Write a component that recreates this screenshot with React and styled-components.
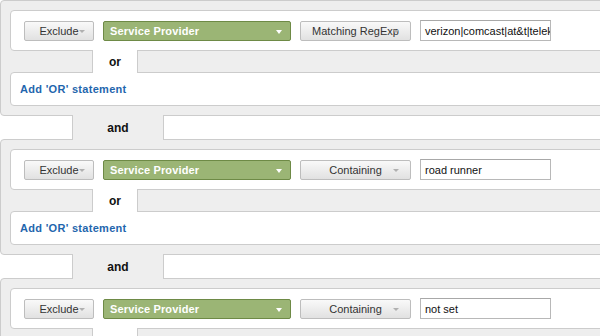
import React from "react";
import styled, { createGlobalStyle } from "styled-components";

const Global = createGlobalStyle`
  html, body { margin: 0; padding: 0; background: #fff; overflow: hidden; }
  body { font-family: "Liberation Sans", Arial, sans-serif; }
  #root { width: 680px; }
`;

const Page = styled.div`
  display: flex;
  flex-direction: column;
  width: 680px;
`;

const Group = styled.div`
  background: #eeeeee;
  border: 1px solid #cccccc;
  border-radius: 4px;
  padding: 9px;
  display: flex;
  flex-direction: column;
`;

const Clause = styled.div`
  background: #fff;
  border: 1px solid #cccccc;
  border-radius: 4px;
  height: 20px;
  padding: 10px 0 9px 13px;
  display: flex;
  align-items: flex-start;
  gap: 9px;
`;

const OrLink = styled.div`
  align-self: flex-start;
  margin: -1px 0 -1px 82px;
  width: 44px;
  height: 23px;
  background: #fff;
  border-left: 1px solid #cccccc;
  border-right: 1px solid #cccccc;
  position: relative;
  z-index: 1;
  display: flex;
  align-items: center;
  justify-content: center;
  font-size: 12px;
  font-weight: bold;
  color: #111;
`;

const AndLink = styled.div`
  align-self: flex-start;
  margin: -1px 0 -1px 72px;
  width: 90px;
  height: 25px;
  background: #eeeeee;
  border-left: 1px solid #cccccc;
  border-right: 1px solid #cccccc;
  position: relative;
  z-index: 1;
  display: flex;
  align-items: center;
  justify-content: center;
  font-size: 12px;
  font-weight: bold;
  color: #111;
`;

const AddBox = styled.div`
  background: #fff;
  border: 1px solid #cccccc;
  border-radius: 4px;
  height: 32px;
  padding-left: 9px;
  display: flex;
  align-items: center;
  font-size: 11px;
  line-height: 12px;
  font-weight: bold;
  letter-spacing: 0.3px;
  color: #1f66ad;
  cursor: pointer;
`;

const GrayButton = styled.div`
  position: relative;
  box-sizing: border-box;
  width: ${(p) => p.$w}px;
  height: 20px;
  border: 1px solid #bdbdbd;
  border-radius: 2px;
  background: linear-gradient(#f9f9f9, #e1e1e1);
  display: flex;
  align-items: center;
  justify-content: center;
  font-size: 11px;
  color: #333;
  flex-shrink: 0;
`;

const GrayArrow = styled.span`
  position: absolute;
  right: ${(p) => p.$right}px;
  top: 8px;
  width: 0;
  height: 0;
  border-left: 3.5px solid transparent;
  border-right: 3.5px solid transparent;
  border-top: 3px solid #b0b0b0;
`;

const GreenButton = styled.div`
  position: relative;
  box-sizing: border-box;
  width: 188px;
  height: 20px;
  border: 1px solid #6e8a46;
  border-radius: 2px;
  background: #9bb575;
  display: flex;
  align-items: center;
  padding-left: 6px;
  font-size: 11px;
  font-weight: bold;
  letter-spacing: 0.15px;
  color: #fff;
  flex-shrink: 0;
`;

const WhiteArrow = styled.span`
  position: absolute;
  right: 8px;
  top: 8px;
  width: 0;
  height: 0;
  border-left: 3.5px solid transparent;
  border-right: 3.5px solid transparent;
  border-top: 4px solid #fff;
`;

const TextBox = styled.div`
  box-sizing: border-box;
  width: 131px;
  height: 21px;
  margin-top: -1px;
  border: 1px solid #b8b8b8;
  border-top-color: #a8a8a8;
  background: #fff;
  padding-left: 4px;
  display: flex;
  align-items: center;
  font-size: 11px;
  color: #111;
  white-space: nowrap;
  overflow: hidden;
  flex-shrink: 0;
`;

const groups = [
  { op: "Matching RegExp", value: "verizon|comcast|at&t|telekom" },
  { op: "Containing", value: "road runner" },
  { op: "Containing", value: "not set" },
];

function Condition({ op, value }) {
  return (
    <Clause>
      <GrayButton $w={70}>
        Exclude
        <GrayArrow $right={8} />
      </GrayButton>
      <GreenButton>
        Service Provider
        <WhiteArrow />
      </GreenButton>
      <GrayButton $w={111}>
        {op}
        <GrayArrow $right={11} />
      </GrayButton>
      <TextBox>{value}</TextBox>
    </Clause>
  );
}

export default function App() {
  return (
    <Page>
      <Global />
      {groups.map((g, i) => (
        <React.Fragment key={i}>
          {i > 0 && <AndLink>and</AndLink>}
          <Group>
            <Condition op={g.op} value={g.value} />
            <OrLink>or</OrLink>
            <AddBox>Add 'OR' statement</AddBox>
          </Group>
        </React.Fragment>
      ))}
    </Page>
  );
}
